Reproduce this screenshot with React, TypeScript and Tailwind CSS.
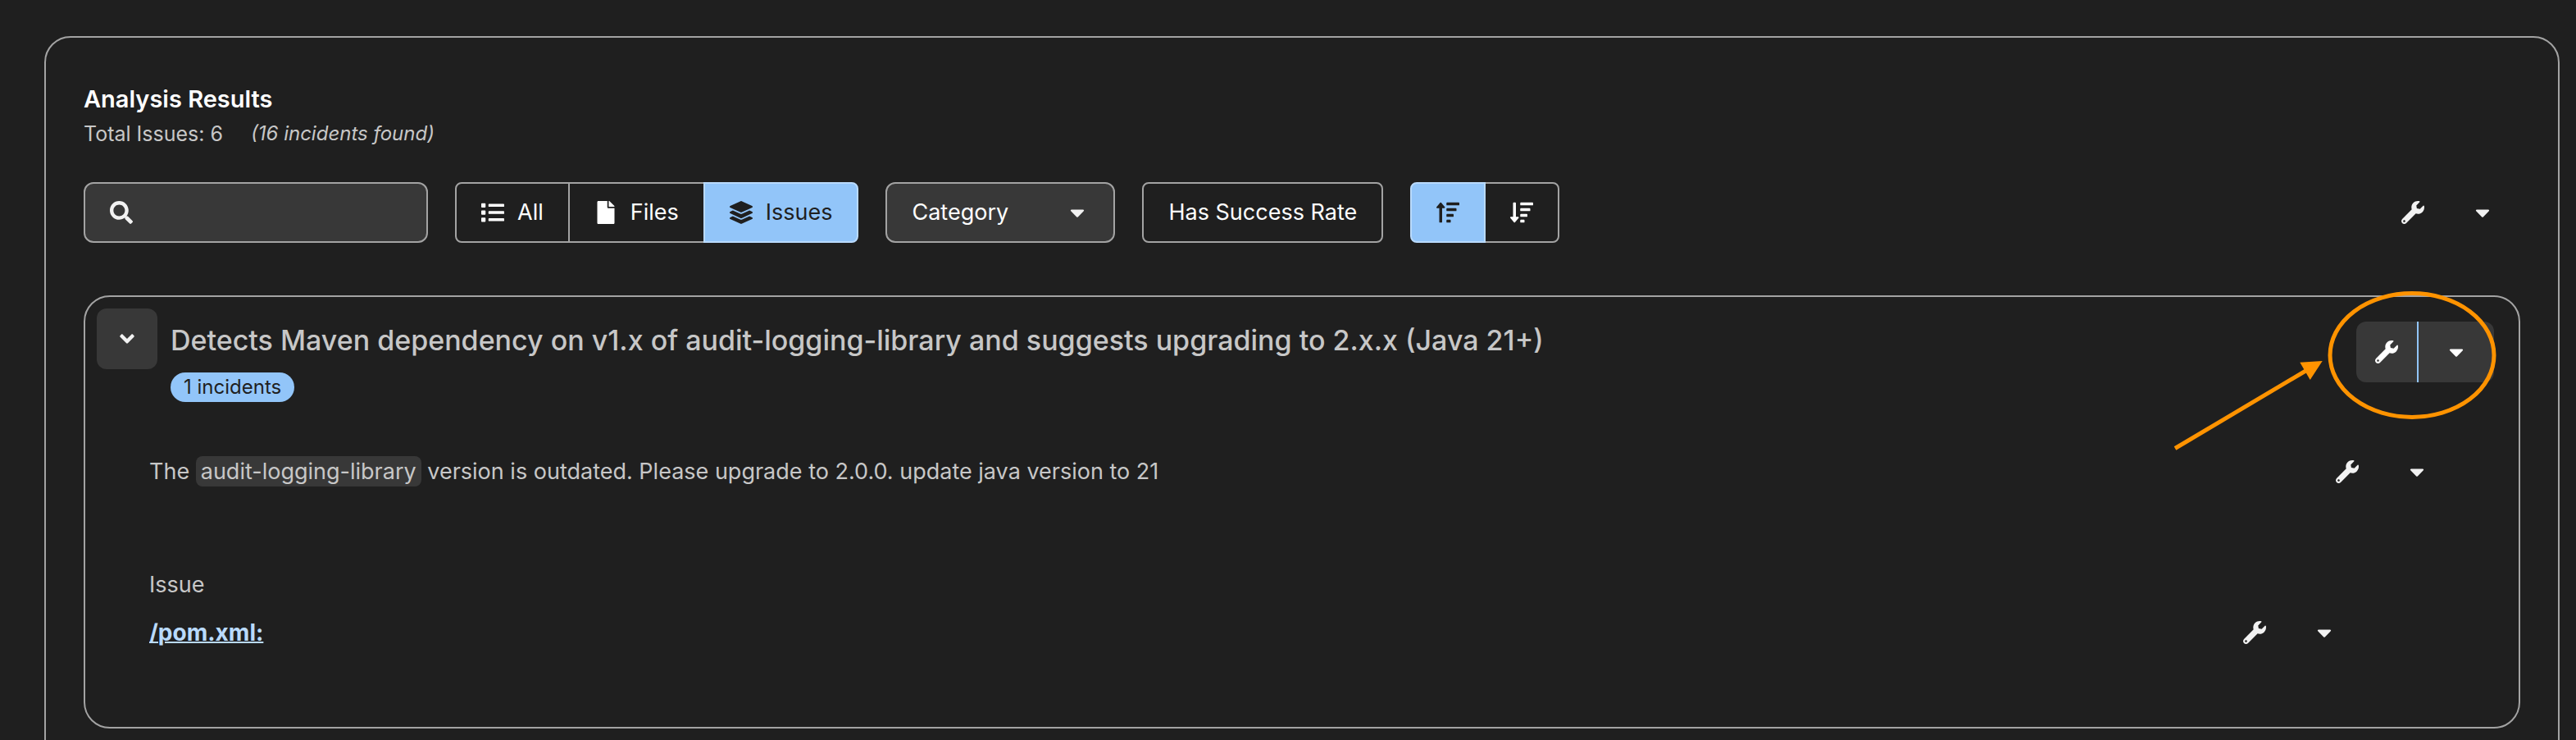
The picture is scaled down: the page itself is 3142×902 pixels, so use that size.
import type { ReactNode } from "react";
import {
  FaAngleDown,
  FaCaretDown,
  FaFile,
  FaLayerGroup,
  FaList,
  FaSearch,
  FaSortAmountDown,
  FaSortAmountUp,
  FaWrench,
} from "react-icons/fa";

type SegmentProps = {
  icon: ReactNode;
  label?: string;
  name: string;
  active?: boolean;
};

function Segment({ icon, label, name, active = false }: SegmentProps) {
  const tone = active
    ? "z-10 border-[#b9dafc] bg-[#92c5f9] text-[#1f1f1f]"
    : "border-[#a3a3a3] text-white";
  return (
    <button
      type="button"
      aria-label={name}
      aria-pressed={active}
      className={`relative flex h-[74px] items-center gap-4 border-2 px-[30px] first:rounded-l-lg last:rounded-r-lg not-first:-ml-0.5 ${tone}`}
    >
      <span className="flex w-7 shrink-0 justify-center">{icon}</span>
      {label && <span>{label}</span>}
    </button>
  );
}

function FixActions({ filled = false }: { filled?: boolean }) {
  const surface = filled ? "bg-[#383838] text-white" : "text-[#f2f2f2]";
  const divider = filled ? "border-[#92c5f9]" : "border-transparent";
  return (
    <div className={`flex h-[74px] shrink-0 overflow-hidden rounded-xl ${surface}`}>
      <button type="button" aria-label="Get solution" className="flex w-[74px] items-center justify-center">
        <FaWrench className="size-7" />
      </button>
      <button
        type="button"
        aria-label="More solution options"
        className={`flex w-[94px] items-center justify-center border-l-2 ${divider}`}
      >
        <FaCaretDown className="size-7" />
      </button>
    </div>
  );
}

function Annotation() {
  return (
    <svg
      aria-hidden="true"
      viewBox="0 0 396 200"
      className="pointer-events-none absolute -top-2 right-[26px] h-[200px] w-[396px]"
      fill="none"
      stroke="#ff9300"
      strokeWidth="5"
    >
      <ellipse cx="292" cy="79" rx="100" ry="75.400" />
      <path d="M3 192.500 164 97" />
      <path d="M182.700 86 155.300 87.700 167.700 109Z" fill="#ff9300" stroke="none" />
    </svg>
  );
}

export default function App() {
  return (
    <div className="h-screen overflow-hidden bg-[#1f1f1f] pt-11 pr-5 pl-[54px] font-[Inter,sans-serif] text-[27px] leading-[42px] text-[#c7c7c7]">
      <main className="rounded-[32px] border-2 border-[#a3a3a3] pt-[54px] pr-[46px] pb-12 pl-[46px]">
        <h1 className="text-[29px] font-semibold text-white">Analysis Results</h1>
        <p className="flex items-center gap-[34px]">
          <span className="text-[25px]">Total Issues: 6</span>
          <em className="text-2xl leading-[42px]">(16 incidents found)</em>
        </p>

        <div className="mt-[38px] flex items-center justify-between">
          <div className="flex items-center gap-[33px]">
            <label className="flex h-[74px] w-[420px] items-center gap-4 rounded-xl border-2 border-[#a3a3a3] bg-[#383838] px-[30px] text-[#f2f2f2]">
              <FaSearch className="size-7 shrink-0" />
              <input type="search" aria-label="Search issues" className="w-full min-w-0 bg-transparent outline-none" />
            </label>

            <div role="group" aria-label="Group by" className="flex">
              <Segment name="All" label="All" icon={<FaList className="size-7" />} />
              <Segment name="Files" label="Files" icon={<FaFile className="size-7" />} />
              <Segment name="Issues" label="Issues" icon={<FaLayerGroup className="size-7" />} active />
            </div>

            <div className="relative w-[280px] text-white">
              <select
                aria-label="Category"
                className="h-[74px] w-full appearance-none rounded-xl border-2 border-[#a3a3a3] bg-[#383838] px-[30px]"
              >
                <option>Category</option>
              </select>
              <FaCaretDown className="pointer-events-none absolute top-[23px] right-8 size-7 text-[#f2f2f2]" />
            </div>

            <button type="button" className="h-[74px] rounded-lg border-2 border-[#a3a3a3] px-[30px] text-white">
              Has Success Rate
            </button>

            <div role="group" aria-label="Sort order" className="flex">
              <Segment name="Sort ascending" icon={<FaSortAmountUp className="size-7" />} active />
              <Segment name="Sort descending" icon={<FaSortAmountDown className="size-7" />} />
            </div>
          </div>
          <FixActions />
        </div>

        <section className="relative mt-16 rounded-[32px] border-2 border-[#a3a3a3] pt-[14px] pb-[78px]">
          <header className="flex items-start gap-4 pr-[30px] pl-[14px]">
            <button
              type="button"
              aria-label="Collapse issue"
              aria-expanded="true"
              className="flex size-[74px] shrink-0 items-center justify-center rounded-xl bg-[#383838] text-[#f2f2f2]"
            >
              <FaAngleDown className="size-7" />
            </button>
            <div className="grow pt-4">
              <h2 className="text-[34px] leading-[46px] font-medium">
                Detects Maven dependency on v1.x of audit-logging-library and suggests upgrading to 2.x.x (Java 21+)
              </h2>
              <span className="mt-4 inline-block rounded-full bg-[#92c5f9] px-4 align-top text-2xl leading-9 text-[#1f1f1f]">
                1 incidents
              </span>
            </div>
            <div className="pt-4">
              <FixActions filled />
            </div>
          </header>

          <div className="mt-12 pr-[78px] pl-[78px]">
            <div className="flex items-center justify-between">
              <p>
                The <code className="rounded-lg bg-[#383838] px-1.5 py-0.5 font-[Inter,sans-serif]">audit-logging-library</code>{" "}
                version is outdated. Please upgrade to 2.0.0. update java version to 21
              </p>
              <FixActions />
            </div>
            <div className="mt-20 pr-[113px]">
              <h3>Issue</h3>
              <div className="flex items-center justify-between">
                <a href="#pom" className="text-[28px] font-bold text-[#b9dafc] underline decoration-2">
                  /pom.xml:
                </a>
                <FixActions />
              </div>
            </div>
          </div>
          <Annotation />
        </section>
      </main>
    </div>
  );
}
